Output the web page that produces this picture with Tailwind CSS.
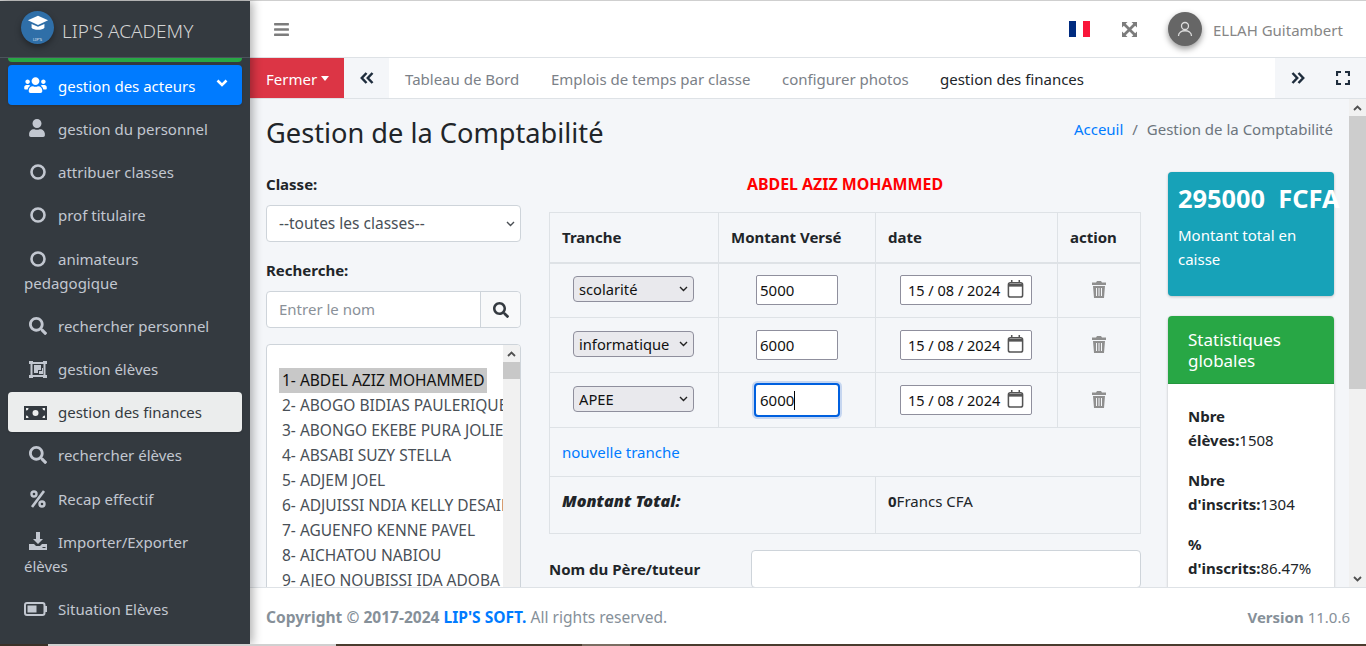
<!DOCTYPE html>
<html lang="fr">
<head>
    <meta charset="UTF-8">
    <meta name="viewport" content="width=device-width, initial-scale=1.0">
    <title>Gestion de la Comptabilité</title>
    <script src="https://cdn.jsdelivr.net/npm/@tailwindcss/browser@4"></script>
</head>
<body class="h-[646px] w-[1366px] overflow-hidden flex flex-col bg-white font-['Noto_Sans',sans-serif] text-[15px] leading-6 text-[#212529]">
    <div class="h-px bg-[#cfcfcf] shrink-0"></div>

    <div class="flex flex-1 min-h-0">
        <!-- Sidebar -->
        <aside class="relative z-10 w-[250px] shrink-0 overflow-hidden bg-[#343a40] text-[#c2c7d0] shadow-[3px_0_9px_rgba(0,0,0,.3)]">
            <div class="h-[57px] border-b border-[#4b545c] flex items-center pl-[21px]">
                <div class="relative w-[33px] h-[33px] rounded-full bg-[#2f6fa8] shadow-[0_3px_6px_rgba(0,0,0,.35)] flex items-center justify-center mb-1">
                    <svg class="w-[22px] h-[20px] -mt-1.5" viewBox="0 0 24 20" fill="#fff"><path d="M12 1 1 6l11 5 11-5z"/><path d="M5 10v4c2 3 12 3 14 0v-4l-7 3z"/></svg>
                    <span class="absolute bottom-[2px] text-[4px] leading-none text-white/80">LIP'S</span>
                </div>
                <span class="ml-2 mt-[3px] text-[19px] font-light text-[#d3d3d3]">LIP'S ACADEMY</span>
            </div>
            <div class="mx-2 h-1 bg-[#28a745] rounded-b mb-[3px]"></div>
            <nav class="px-2 flex flex-col gap-[3px]">
                <a class="relative h-10 pl-4 pt-[9px] rounded bg-[#007bff] text-white shadow-sm whitespace-nowrap">
                    <span class="inline-block w-[34px] align-[-2px]"><svg class="w-[23px] h-[18px]" viewBox="0 0 640 512" fill="currentColor"><path d="M96 224c35.3 0 64-28.7 64-64s-28.7-64-64-64-64 28.7-64 64 28.7 64 64 64zm448 0c35.3 0 64-28.7 64-64s-28.7-64-64-64-64 28.7-64 64 28.7 64 64 64zm32 32h-64c-17.6 0-33.5 7.1-45.1 18.6 40.3 22.1 68.9 62 75.1 109.4h66c17.7 0 32-14.3 32-32v-32c0-35.3-28.7-64-64-64zm-256 0c61.9 0 112-50.1 112-112S381.9 32 320 32 208 82.1 208 144s50.1 112 112 112zm76.8 32h-8.3c-20.8 10-43.9 16-68.5 16s-47.6-6-68.5-16h-8.3C179.6 288 128 339.6 128 403.2V432c0 26.5 21.5 48 48 48h288c26.5 0 48-21.5 48-48v-28.8c0-63.6-51.6-115.2-115.2-115.2zm-223.7-13.4C161.5 263.1 145.6 256 128 256H64c-35.3 0-64 28.7-64 64v32c0 17.7 14.3 32 32 32h65.9c6.3-47.4 34.9-87.3 75.2-109.4z"/></svg></span>gestion des acteurs
                    <svg class="absolute right-[14px] top-[13px] w-[12px] h-[10px]" viewBox="0 0 12 10" fill="none" stroke="#fff" stroke-width="2.6"><path d="M1.5 2.5 6 7l4.5-4.5"/></svg>
                </a>
                <a class="h-10 pl-4 pt-[9px] whitespace-nowrap">
                    <span class="inline-block w-[34px] pl-[5px] align-[-2px]"><svg class="w-4 h-[18px]" viewBox="0 0 448 512" fill="currentColor"><path d="M224 256c70.7 0 128-57.3 128-128S294.7 0 224 0 96 57.3 96 128s57.3 128 128 128zm89.6 32h-16.7c-22.2 10.2-46.9 16-72.9 16s-50.6-5.8-72.9-16h-16.7C60.2 288 0 348.2 0 422.4V464c0 26.5 21.5 48 48 48h352c26.5 0 48-21.5 48-48v-41.6c0-74.2-60.2-134.4-134.4-134.4z"/></svg></span>gestion du personnel
                </a>
                <a class="h-10 pl-4 pt-[9px] whitespace-nowrap">
                    <span class="inline-block w-[34px] pl-[6px] align-[-2px]"><svg class="w-4 h-4" viewBox="0 0 16 16" fill="none" stroke="currentColor" stroke-width="2.6"><circle cx="8" cy="8" r="6.5"/></svg></span>attribuer classes
                </a>
                <a class="h-10 pl-4 pt-[9px] whitespace-nowrap">
                    <span class="inline-block w-[34px] pl-[6px] align-[-2px]"><svg class="w-4 h-4" viewBox="0 0 16 16" fill="none" stroke="currentColor" stroke-width="2.6"><circle cx="8" cy="8" r="6.5"/></svg></span>prof titulaire
                </a>
                <a class="h-[66px] pl-4 pt-[10px] pr-4">
                    <span class="inline-block w-[34px] pl-[6px] align-[-2px]"><svg class="w-4 h-4" viewBox="0 0 16 16" fill="none" stroke="currentColor" stroke-width="2.6"><circle cx="8" cy="8" r="6.5"/></svg></span>animateurs pedagogique
                </a>
                <a class="h-10 pl-4 py-2 whitespace-nowrap">
                    <span class="inline-block w-[34px] pl-[5px] align-[-3px]"><svg class="w-[18px] h-[18px]" viewBox="0 0 512 512" fill="currentColor"><path d="M505 442.7L405.3 343c-4.5-4.5-10.6-7-17-7H372c27.6-35.3 44-79.7 44-128C416 93.1 322.9 0 208 0S0 93.1 0 208s93.1 208 208 208c48.3 0 92.7-16.4 128-44v16.3c0 6.4 2.5 12.5 7 17l99.7 99.7c9.4 9.4 24.6 9.4 33.9 0l28.3-28.3c9.4-9.4 9.4-24.6.1-34zM208 336c-70.7 0-128-57.2-128-128 0-70.7 57.2-128 128-128 70.7 0 128 57.2 128 128 0 70.7-57.2 128-128 128z"/></svg></span>rechercher personnel
                </a>
                <a class="h-10 pl-4 py-2 whitespace-nowrap">
                    <span class="inline-block w-[34px] pl-[5px] align-[-3px]"><svg class="w-[18px] h-[17px]" viewBox="0 0 18 17" fill="none" stroke="currentColor"><path stroke-width="2" d="M2 2h14M2 15h14M2.500 2v13M15.500 2v13"/><path fill="currentColor" stroke="none" d="M5 4h7v5H9v3H5zM10 10h3V7h1v6h-4z"/><path fill="currentColor" stroke="none" d="M0 0h4v3H0zM14 0h4v3h-4zM0 14h4v3H0zM14 14h4v3h-4z"/></svg></span>gestion élèves
                </a>
                <a class="h-10 pl-4 py-2 rounded bg-[#ebeded] text-[#343a40] shadow-sm whitespace-nowrap">
                    <span class="inline-block w-[34px] align-[-2px]"><svg class="w-[23px] h-[14px]" viewBox="0 0 23 14" fill="currentColor"><path fill-rule="evenodd" d="M0 0h23v14H0zM11.500 4a3 3 0 1 0 0 6 3 3 0 0 0 0-6zM2 2v2.500A2.500 2.500 0 0 0 4.500 2zM18.500 2A2.500 2.500 0 0 0 21 4.500V2zM2 12h2.500A2.500 2.500 0 0 0 2 9.500zM21 12V9.500A2.500 2.500 0 0 0 18.500 12z"/></svg></span>gestion des finances
                </a>
                <a class="h-10 pl-4 py-2 whitespace-nowrap">
                    <span class="inline-block w-[34px] pl-[5px] align-[-3px]"><svg class="w-[18px] h-[18px]" viewBox="0 0 512 512" fill="currentColor"><path d="M505 442.7L405.3 343c-4.5-4.5-10.6-7-17-7H372c27.6-35.3 44-79.7 44-128C416 93.1 322.9 0 208 0S0 93.1 0 208s93.1 208 208 208c48.3 0 92.7-16.4 128-44v16.3c0 6.4 2.5 12.5 7 17l99.7 99.7c9.4 9.4 24.6 9.4 33.9 0l28.3-28.3c9.4-9.4 9.4-24.6.1-34zM208 336c-70.7 0-128-57.2-128-128 0-70.7 57.2-128 128-128 70.7 0 128 57.2 128 128 0 70.7-57.2 128-128 128z"/></svg></span>rechercher élèves
                </a>
                <a class="h-10 pl-4 pt-[9px] whitespace-nowrap">
                    <span class="inline-block w-[34px] pl-[6px] align-[-3px]"><svg class="w-4 h-[18px]" viewBox="0 0 16 18" fill="none" stroke="currentColor"><circle cx="4" cy="4" r="2.500" stroke-width="2.400"/><circle cx="12" cy="14" r="2.500" stroke-width="2.400"/><path stroke-width="2.600" d="M14 1 2 17"/></svg></span>Recap effectif
                </a>
                <a class="h-[66px] pl-4 pt-[9px] pr-4">
                    <span class="inline-block w-[34px] pl-[5px] align-[-2px]"><svg class="w-[18px] h-[18px]" viewBox="0 0 18 18" fill="currentColor"><path d="M7 0h4v7h3l-5 5-5-5h3z"/><path fill-rule="evenodd" d="M0 12h5l2 2h4l2-2h5v6H0zM13.500 15v1h3v-1z"/></svg></span>Importer/Exporter élèves
                </a>
                <a class="h-10 pl-4 pt-[7px] whitespace-nowrap">
                    <span class="inline-block w-[34px] align-[-1px]"><svg class="w-[23px] h-[14px]" viewBox="0 0 23 14" fill="none"><rect x="1" y="1" width="19.500" height="12" rx="2" stroke="currentColor" stroke-width="2"/><rect x="3.500" y="3.500" width="9" height="7" fill="currentColor"/><rect x="21" y="4" width="2" height="6" fill="currentColor"/></svg></span>Situation Elèves
                </a>
            </nav>
        </aside>

        <div class="flex-1 min-w-0 flex flex-col">
            <!-- Top navbar -->
            <header class="h-[57px] shrink-0 border-b border-[#dee2e6] flex items-center text-[#7c7c7c]">
                <svg class="ml-6 w-[15px] h-[17px]" viewBox="0 0 448 512" fill="currentColor"><path d="M16 132h416c8.837 0 16-7.163 16-16V76c0-8.837-7.163-16-16-16H16C7.163 60 0 67.163 0 76v40c0 8.837 7.163 16 16 16zm0 160h416c8.837 0 16-7.163 16-16v-40c0-8.837-7.163-16-16-16H16c-8.837 0-16 7.163-16 16v40c0 8.837 7.163 16 16 16zm0 160h416c8.837 0 16-7.163 16-16v-40c0-8.837-7.163-16-16-16H16c-8.837 0-16 7.163-16 16v40c0 8.837 7.163 16 16 16z"/></svg>
                <div class="ml-auto flex w-[21px] h-4">
                    <span class="flex-1 bg-[#002b7f]"></span><span class="flex-1 bg-white"></span><span class="flex-1 bg-[#f9163a]"></span>
                </div>
                <svg class="ml-8 w-[15px] h-[15px]" viewBox="0 0 15 15" fill="currentColor"><path d="M0 0h5.500L3.700 1.800 7.500 5.600 11.300 1.800 9.500 0H15v5.500l-1.800-1.800L9.400 7.500l3.800 3.800L15 9.500V15H9.500l1.800-1.800-3.800-3.800-3.800 3.800L5.500 15H0V9.500l1.800 1.800 3.800-3.800-3.800-3.800L0 5.500z"/></svg>
                <div class="ml-[31px] w-[34px] h-[34px] rounded-full bg-[#666] shadow-[0_3px_6px_rgba(0,0,0,.4)] flex items-center justify-center">
                    <svg class="w-4 h-4" viewBox="0 0 16 16" fill="none" stroke="#ddd" stroke-width="1.300"><circle cx="8" cy="5" r="3.500"/><path d="M1.500 15c0-7 13-7 13 0"/></svg>
                </div>
                <span class="ml-[11px] mr-6 mt-[2px] w-[129px] whitespace-nowrap text-[#868686]">ELLAH Guitambert</span>
            </header>

            <!-- Tabs -->
            <div class="h-[41px] shrink-0 border-b border-[#dee2e6] flex items-stretch text-[#7b8188]">
                <div class="w-[94px] bg-[#dc3545] text-white flex items-center pl-4 pt-px gap-1">
                    Fermer
                    <span class="w-0 h-0 border-x-[4px] border-x-transparent border-t-[5px] border-t-white"></span>
                </div>
                <div class="w-[45px] bg-[#f4f6f9] flex items-center justify-center text-[#1f2d3d]">
                    <svg class="w-[14px] h-[12px]" viewBox="0 0 14 12" fill="none" stroke="currentColor" stroke-width="2.500"><path d="M6.500 1 1.800 6l4.700 5M12.500 1 7.800 6l4.700 5"/></svg>
                </div>
                <div class="w-[146px] pl-4 pt-px flex items-center whitespace-nowrap">Tableau de Bord</div>
                <div class="w-[231px] pl-4 pt-px flex items-center whitespace-nowrap">Emplois de temps par classe</div>
                <div class="w-[158px] pl-4 pt-px flex items-center whitespace-nowrap">configurer photos</div>
                <div class="pl-4 pt-px flex items-center whitespace-nowrap text-[#212529]">gestion des finances</div>
                <div class="ml-auto w-[45px] bg-[#f4f6f9] flex items-center justify-center text-[#1f2d3d]">
                    <svg class="w-[14px] h-[12px]" viewBox="0 0 14 12" fill="none" stroke="currentColor" stroke-width="2.500"><path d="M1.500 1 6.200 6l-4.700 5M7.500 1l4.700 5-4.700 5"/></svg>
                </div>
                <div class="w-[46px] bg-[#f4f6f9] flex items-center justify-center text-[#1f2d3d]">
                    <svg class="w-[14px] h-[14px]" viewBox="0 0 14 14" fill="none" stroke="currentColor" stroke-width="2.200"><path d="M1 5V1h4M9 1h4v4M13 9v4H9M5 13H1V9"/></svg>
                </div>
            </div>

            <!-- Content -->
            <div class="flex-1 min-h-0 flex bg-[#f4f6f9]">
                <main class="flex-1 min-w-0 overflow-hidden px-4">
                    <div class="pt-4 h-[73px] flex justify-between">
                        <h1 class="text-[27.200px] leading-9 whitespace-nowrap">Gestion de la Comptabilité</h1>
                        <div class="text-[15px] leading-6 mt-[2px] whitespace-nowrap text-[#6c757d]">
                            <span class="text-[#007bff]">Acceuil</span>
                            <span class="mx-[5px]">/</span>
                            Gestion de la Comptabilité
                        </div>
                    </div>

                    <div class="flex items-start">
                        <!-- Left column -->
                        <div class="w-[255px] shrink-0">
                            <label class="block font-bold mb-[9px]">Classe:</label>
                            <div class="relative">
                                <select class="block w-full h-[37px] pl-3 pb-0.5 appearance-none bg-white rounded border border-[#ced4da] text-[15.500px] text-[#495057]">
                                    <option>--toutes les classes--</option>
                                </select>
                                <svg class="absolute right-[6px] top-[16px] w-[9px] h-[6px]" viewBox="0 0 9 6" fill="none" stroke="#4a4f54" stroke-width="1.400"><path d="M1 1l3.500 3.500L8 1"/></svg>
                            </div>
                            <label class="block font-bold mt-4 mb-[9px]">Recherche:</label>
                            <div class="flex h-[37px] bg-white rounded border border-[#ced4da]">
                                <input class="flex-1 min-w-0 px-3 pb-0.5 placeholder:text-[#8a9199]" placeholder="Entrer le nom">
                                <div class="w-10 bg-[#f8f9fa] border-l border-[#ced4da] rounded-r flex items-center justify-center">
                                    <svg class="w-4 h-4 text-[#343a40]" viewBox="0 0 512 512" fill="currentColor"><path d="M505 442.7L405.3 343c-4.500-4.500-10.600-7-17-7H372c27.600-35.300 44-79.700 44-128C416 93.100 322.900 0 208 0S0 93.100 0 208s93.100 208 208 208c48.300 0 92.700-16.400 128-44v16.300c0 6.400 2.500 12.500 7 17l99.700 99.700c9.400 9.400 24.600 9.400 33.900 0l28.300-28.300c9.400-9.400 9.400-24.600.1-34zM208 336c-70.700 0-128-57.200-128-128 0-70.700 57.200-128 128-128 70.700 0 128 57.200 128 128 0 70.700-57.200 128-128 128z"/></svg>
                                </div>
                            </div>
                            <div class="mt-4 h-[300px] flex bg-white rounded border border-[#ced4da] overflow-hidden">
                                <div class="flex-1 min-w-0 overflow-hidden pl-3 pt-[23px] text-[15.500px] leading-[25px] whitespace-nowrap text-[#495057]">
                                    <div class="w-fit px-[3px] bg-[#c8c8c8] text-[#111]">1- ABDEL AZIZ MOHAMMED</div>
                                    <div class="px-[3px]">2- ABOGO BIDIAS PAULERIQUE</div>
                                    <div class="px-[3px]">3- ABONGO EKEBE PURA JOLIE</div>
                                    <div class="px-[3px]">4- ABSABI SUZY STELLA</div>
                                    <div class="px-[3px]">5- ADJEM JOEL</div>
                                    <div class="px-[3px]">6- ADJUISSI NDIA KELLY DESAILLY</div>
                                    <div class="px-[3px]">7- AGUENFO KENNE PAVEL</div>
                                    <div class="px-[3px]">8- AICHATOU NABIOU</div>
                                    <div class="px-[3px]">9- AJEO NOUBISSI IDA ADOBA</div>
                                </div>
                                <div class="w-[17px] shrink-0 bg-[#f1f1f1]">
                                    <div class="h-[17px] flex items-center justify-center">
                                        <svg class="w-[9px] h-[6px]" viewBox="0 0 9 6" fill="none" stroke="#505050" stroke-width="1.800"><path d="M1 5l3.500-3.500L8 5"/></svg>
                                    </div>
                                    <div class="h-[17px] bg-[#c8c8c8]"></div>
                                </div>
                            </div>
                        </div>

                        <!-- Middle column -->
                        <div class="w-[592px] shrink-0 ml-[28px]">
                            <div class="text-center font-bold text-[15.900px] text-[#ff0000] mb-4">ABDEL AZIZ MOHAMMED</div>
                            <table class="w-full table-fixed border-collapse">
                                <thead>
                                    <tr class="h-[50px] font-bold text-left">
                                        <th class="w-[169px] pl-3 border border-b-2 border-[#dee2e6]">Tranche</th>
                                        <th class="w-[157px] pl-3 border border-b-2 border-[#dee2e6] whitespace-nowrap">Montant Versé</th>
                                        <th class="w-[182px] pl-3 border border-b-2 border-[#dee2e6]">date</th>
                                        <th class="pl-3 border border-b-2 border-[#dee2e6]">action</th>
                                    </tr>
                                </thead>
                                <tbody>
                                    <tr class="h-[55px]">
                                        <td class="border border-[#dee2e6]">
                                            <div class="relative ml-[23px] w-[121px] -translate-y-px">
                                                <select class="block w-full h-[26px] pl-[5px] appearance-none rounded bg-[#e9e9ed] border border-[#8f8f9d] text-[14.700px] text-[#111]"><option>scolarité</option></select>
                                                <svg class="absolute right-[6px] top-[10px] w-[9px] h-[6px]" viewBox="0 0 9 6" fill="none" stroke="#222" stroke-width="1.400"><path d="M1 1l3.500 3.500L8 1"/></svg>
                                            </div>
                                        </td>
                                        <td class="border border-[#dee2e6]"><input class="block mx-auto w-[82px] h-[30px] pl-[3px] rounded-[2px] bg-white border border-[#8f8f9d] text-[#111]" value="5000"></td>
                                        <td class="border border-[#dee2e6]">
                                            <div class="relative ml-[24px] w-[132px]">
                                                <input class="block w-full h-[30px] pl-[7px] rounded-[2px] bg-white border border-[#8f8f9d] text-[14.500px] text-[#111]" value="15 / 08 / 2024">
                                                <svg class="absolute right-[8px] top-[5px] w-[17px] h-[18px]" viewBox="0 0 17 19" fill="none" stroke="#555" stroke-width="1.600"><rect x="1" y="3" width="15" height="15" rx="2"/><path stroke-width="3" d="M1 5.500h15"/><path d="M4.500 0v3M12.500 0v3"/></svg>
                                            </div>
                                        </td>
                                        <td class="border border-[#dee2e6]">
                                            <svg class="block mx-auto w-[14px] h-[17px] -translate-y-px" viewBox="0 0 14 17" fill="#8f8f8f"><path d="M5 0h4l1 1.500h4V4H0V1.500h4zM1 5h12l-1 12H2zM4 7v8h1V7zM6.500 7v8h1V7zM9 7v8h1V7z" fill-rule="evenodd"/></svg>
                                        </td>
                                    </tr>
                                    <tr class="h-[55px]">
                                        <td class="border border-[#dee2e6]">
                                            <div class="relative ml-[23px] w-[121px] -translate-y-px">
                                                <select class="block w-full h-[26px] pl-[5px] appearance-none rounded bg-[#e9e9ed] border border-[#8f8f9d] text-[14.700px] text-[#111]"><option>informatique</option></select>
                                                <svg class="absolute right-[6px] top-[10px] w-[9px] h-[6px]" viewBox="0 0 9 6" fill="none" stroke="#222" stroke-width="1.400"><path d="M1 1l3.500 3.500L8 1"/></svg>
                                            </div>
                                        </td>
                                        <td class="border border-[#dee2e6]"><input class="block mx-auto w-[82px] h-[30px] pl-[3px] rounded-[2px] bg-white border border-[#8f8f9d] text-[#111]" value="6000"></td>
                                        <td class="border border-[#dee2e6]">
                                            <div class="relative ml-[24px] w-[132px]">
                                                <input class="block w-full h-[30px] pl-[7px] rounded-[2px] bg-white border border-[#8f8f9d] text-[14.500px] text-[#111]" value="15 / 08 / 2024">
                                                <svg class="absolute right-[8px] top-[5px] w-[17px] h-[18px]" viewBox="0 0 17 19" fill="none" stroke="#555" stroke-width="1.600"><rect x="1" y="3" width="15" height="15" rx="2"/><path stroke-width="3" d="M1 5.500h15"/><path d="M4.500 0v3M12.500 0v3"/></svg>
                                            </div>
                                        </td>
                                        <td class="border border-[#dee2e6]">
                                            <svg class="block mx-auto w-[14px] h-[17px] -translate-y-px" viewBox="0 0 14 17" fill="#8f8f8f"><path d="M5 0h4l1 1.500h4V4H0V1.500h4zM1 5h12l-1 12H2zM4 7v8h1V7zM6.500 7v8h1V7zM9 7v8h1V7z" fill-rule="evenodd"/></svg>
                                        </td>
                                    </tr>
                                    <tr class="h-[55px]">
                                        <td class="border border-[#dee2e6]">
                                            <div class="relative ml-[23px] w-[121px] -translate-y-px">
                                                <select class="block w-full h-[26px] pl-[5px] appearance-none rounded bg-[#e9e9ed] border border-[#8f8f9d] text-[14.700px] text-[#111]"><option>APEE</option></select>
                                                <svg class="absolute right-[6px] top-[10px] w-[9px] h-[6px]" viewBox="0 0 9 6" fill="none" stroke="#222" stroke-width="1.400"><path d="M1 1l3.500 3.500L8 1"/></svg>
                                            </div>
                                        </td>
                                        <td class="border border-[#dee2e6]">
                                            <div class="relative mx-auto w-[82px]">
                                                <input class="block w-full h-[30px] pl-1 rounded-[2px] bg-white outline-2 outline-[#0060df] shadow-[0_0_0_4px_#c6d6f0] text-[#111]" value="6000">
                                                <span class="absolute left-[38px] top-[6px] w-px h-[19px] bg-black"></span>
                                            </div>
                                        </td>
                                        <td class="border border-[#dee2e6]">
                                            <div class="relative ml-[24px] w-[132px]">
                                                <input class="block w-full h-[30px] pl-[7px] rounded-[2px] bg-white border border-[#8f8f9d] text-[14.500px] text-[#111]" value="15 / 08 / 2024">
                                                <svg class="absolute right-[8px] top-[5px] w-[17px] h-[18px]" viewBox="0 0 17 19" fill="none" stroke="#555" stroke-width="1.600"><rect x="1" y="3" width="15" height="15" rx="2"/><path stroke-width="3" d="M1 5.500h15"/><path d="M4.500 0v3M12.500 0v3"/></svg>
                                            </div>
                                        </td>
                                        <td class="border border-[#dee2e6]">
                                            <svg class="block mx-auto w-[14px] h-[17px] -translate-y-px" viewBox="0 0 14 17" fill="#8f8f8f"><path d="M5 0h4l1 1.500h4V4H0V1.500h4zM1 5h12l-1 12H2zM4 7v8h1V7zM6.500 7v8h1V7zM9 7v8h1V7z" fill-rule="evenodd"/></svg>
                                        </td>
                                    </tr>
                                    <tr class="h-[49px]">
                                        <td colspan="4" class="pl-3 border border-[#dee2e6] text-[#007bff]">nouvelle tranche</td>
                                    </tr>
                                    <tr class="h-[57px]">
                                        <td colspan="2" class="pl-3 pb-[8px] border border-[#dee2e6] text-[16.200px] font-black italic">Montant Total:</td>
                                        <td colspan="2" class="pl-3 pb-[8px] border border-[#dee2e6]"><b>0</b>Francs CFA</td>
                                    </tr>
                                </tbody>
                            </table>
                            <div class="flex mt-4">
                                <label class="w-[202px] pt-[7px] font-bold whitespace-nowrap">Nom du Père/tuteur</label>
                                <input class="flex-1 min-w-0 h-[38px] bg-white rounded border border-[#ced4da]">
                            </div>
                        </div>

                        <!-- Right column -->
                        <div class="w-[166px] shrink-0 ml-[27px]">
                            <div class="h-[124px] rounded bg-[#17a2b8] text-white pt-[9px] px-[10px] shadow-[0_0_1px_rgba(0,0,0,.125),0_1px_3px_rgba(0,0,0,.2)] whitespace-nowrap">
                                <div class="font-bold text-[25.400px] leading-[34px]">295000&nbsp; FCFA</div>
                                <div class="mt-2 whitespace-normal">Montant total en caisse</div>
                            </div>
                            <div class="mt-5 bg-white rounded-t shadow-[0_0_1px_rgba(0,0,0,.125),0_1px_3px_rgba(0,0,0,.2)]">
                                <div class="h-[68px] rounded-t bg-[#28a745] text-white px-5 pt-[13px] text-[17px] leading-[21px] border-b border-[#24963e]">Statistiques globales</div>
                                <div class="px-5 pt-5 pb-4 flex flex-col gap-4">
                                    <p><b>Nbre élèves:</b>1508</p>
                                    <p><b>Nbre d'inscrits:</b>1304</p>
                                    <p><b>% d'inscrits:</b>86.47%</p>
                                </div>
                            </div>
                        </div>
                    </div>
                </main>

                <!-- Page scrollbar -->
                <div class="w-[17px] shrink-0 bg-[#f1f1f1] flex flex-col">
                    <div class="h-[17px] flex items-center justify-center">
                        <svg class="w-[9px] h-[6px]" viewBox="0 0 9 6" fill="none" stroke="#505050" stroke-width="1.800"><path d="M1 5l3.500-3.500L8 5"/></svg>
                    </div>
                    <div class="h-[273px] bg-[#cdcdcd]"></div>
                    <div class="h-[17px] mt-auto flex items-center justify-center">
                        <svg class="w-[9px] h-[6px]" viewBox="0 0 9 6" fill="none" stroke="#505050" stroke-width="1.800"><path d="M1 1l3.500 3.500L8 1"/></svg>
                    </div>
                </div>
            </div>

            <!-- Footer -->
            <footer class="relative h-[57px] shrink-0 bg-white border-t border-[#dee2e6] px-4 pt-px flex items-center justify-between text-[#869099]">
                <div class="text-[15.550px]"><b>Copyright © 2017-2024 <span class="text-[#007bff]">LIP'S SOFT.</span></b> All rights reserved.</div>
                <div><b>Version</b> 11.0.6</div>
            </footer>
        </div>
    </div>

    <!-- Strip of the desktop under the window -->
    <div class="h-[2px] shrink-0 flex relative z-20">
        <div class="w-12 bg-[#3a3128]"></div>
        <div class="w-[288px] bg-[#d0d0d0]"></div>
        <div class="w-[246px] bg-[#4a3c2e]"></div>
        <div class="w-12 bg-[#7a6d62]"></div>
        <div class="flex-1 bg-[#4a3c2e]"></div>
    </div>
</body>
</html>
